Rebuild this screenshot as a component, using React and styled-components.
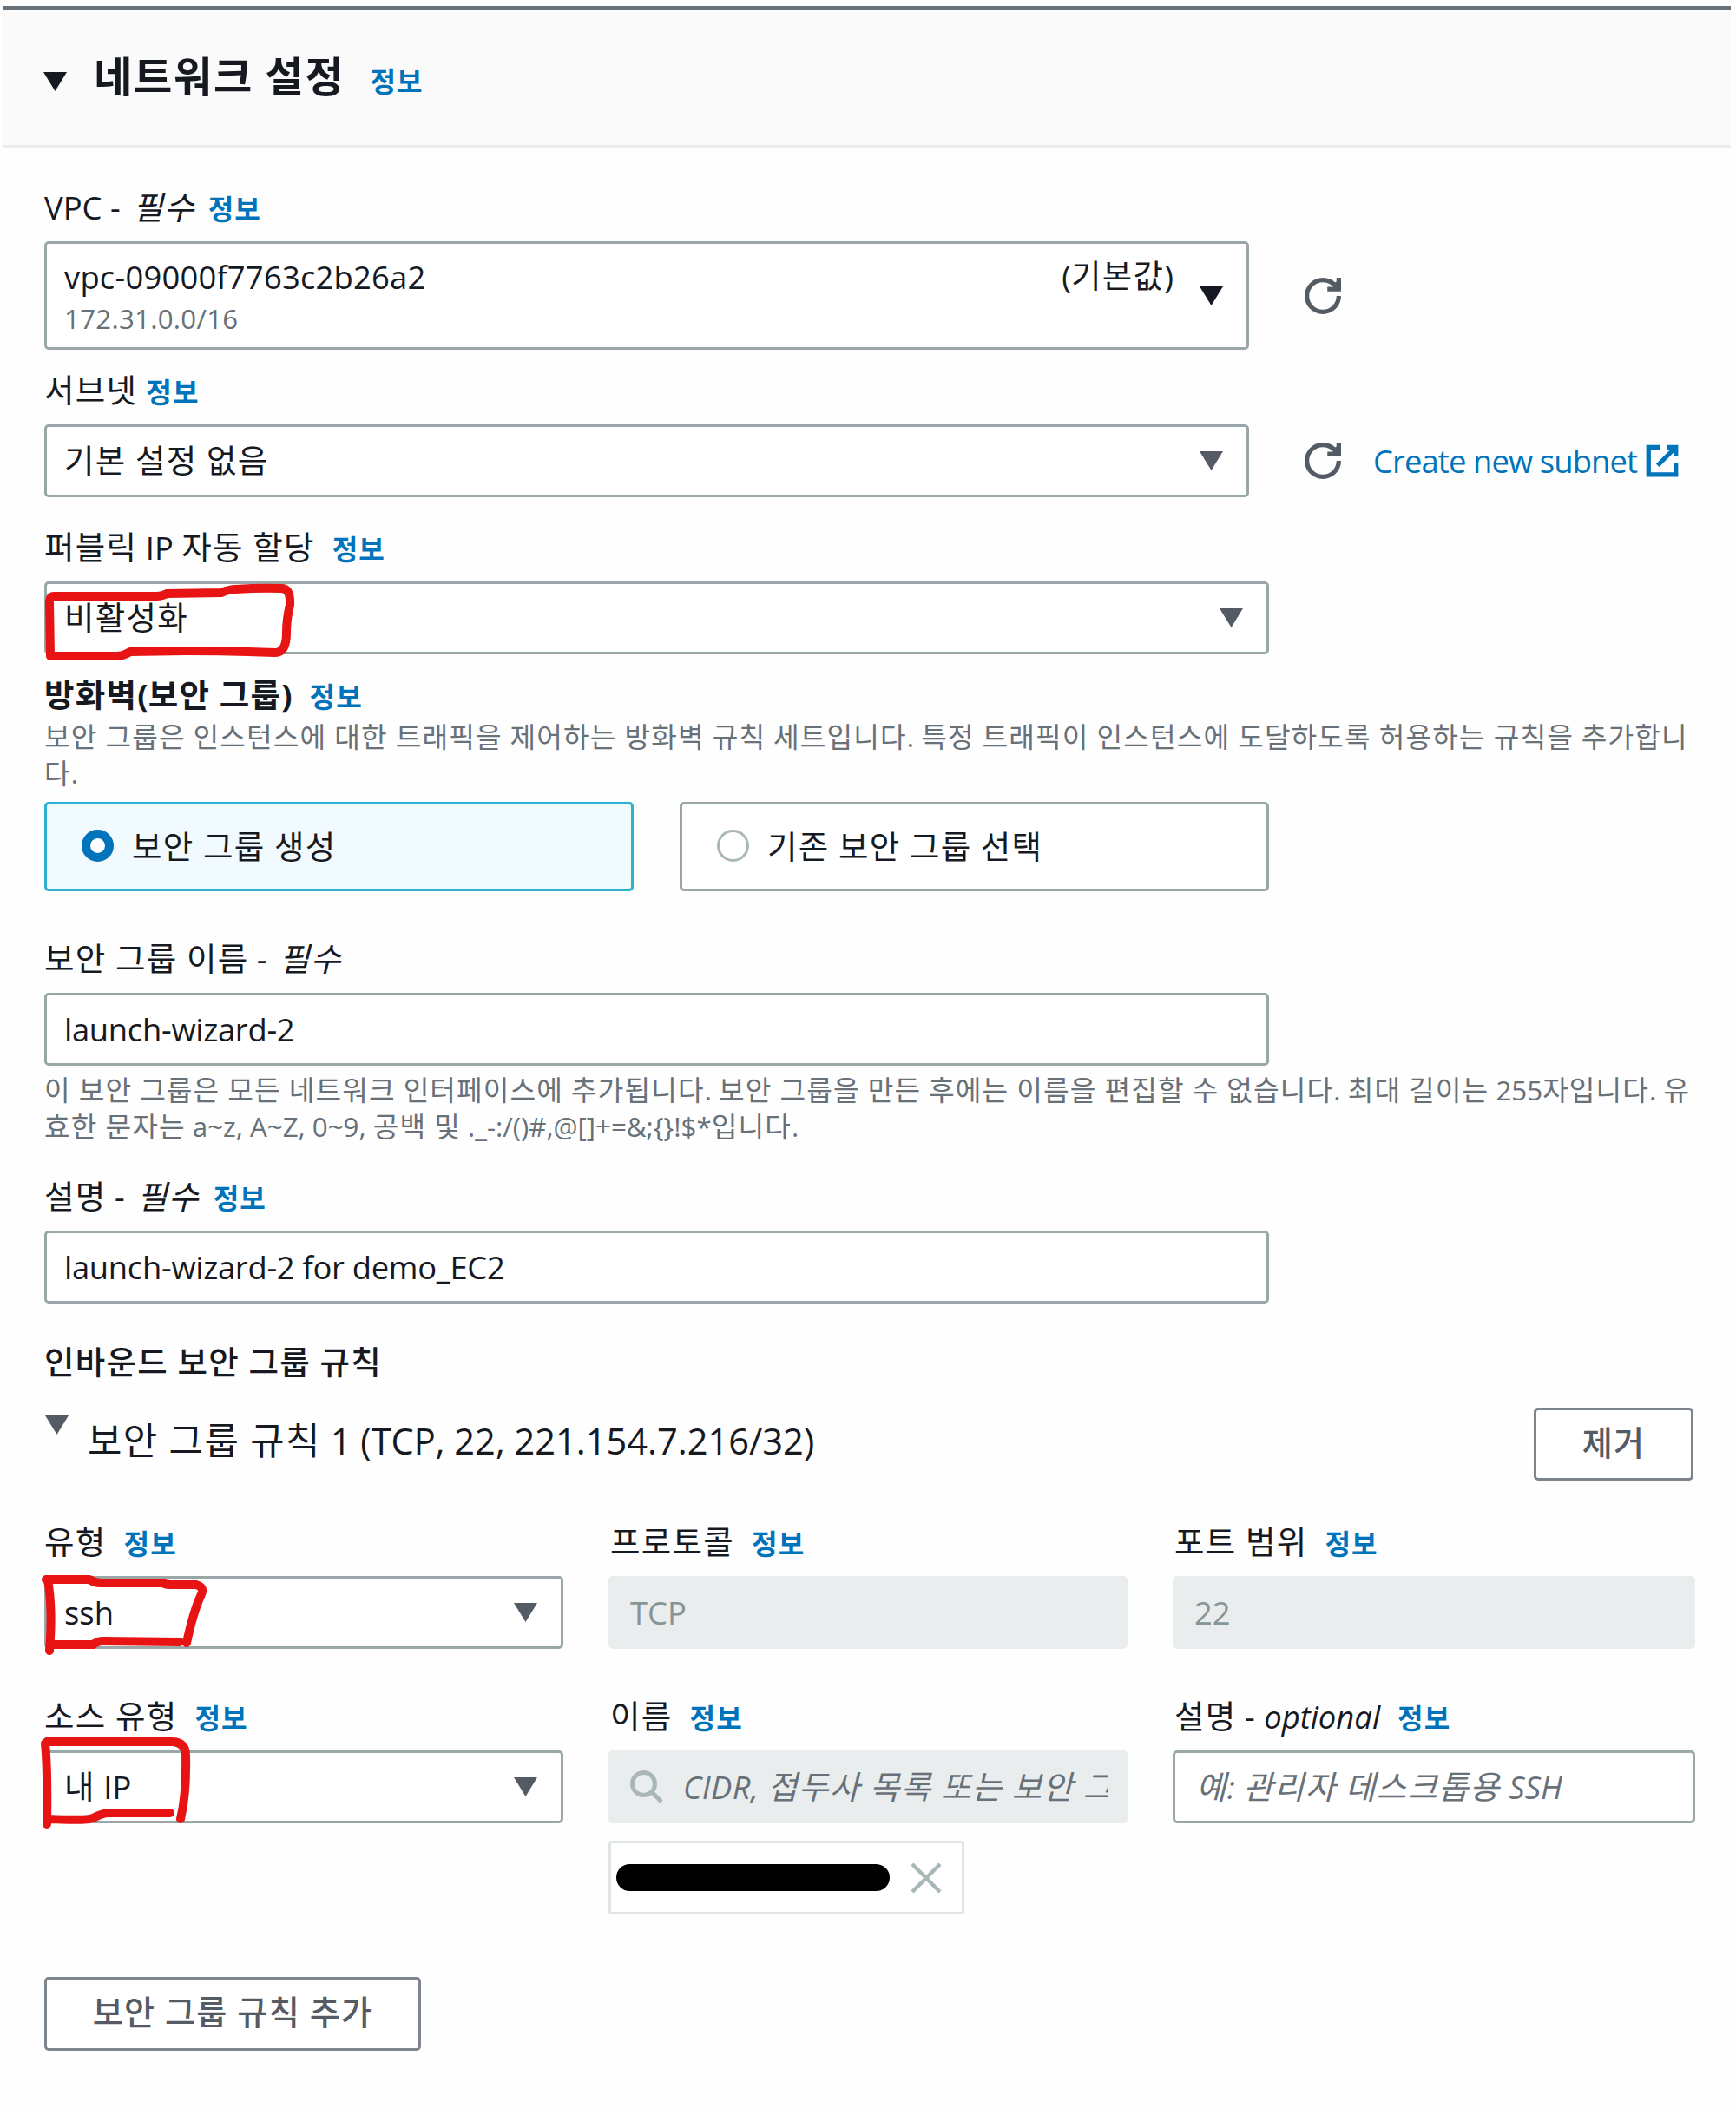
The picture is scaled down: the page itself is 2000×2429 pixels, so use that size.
import React from "react";
import styled, { createGlobalStyle } from "styled-components";

// hangul runs get their own font and spacing, everything else stays latin
function T({ children }) {
  return children
    .split(/([가-힣]+(?: [가-힣]+)*)/)
    .map((part, i) => (i % 2 ? <Ko key={i}>{part}</Ko> : part));
}

function Caret({ dark, className }) {
  return (
    <CaretSvg className={className} viewBox="0 0 27 22">
      <path d="M0 0H27L13.5 22Z" fill={dark ? "#16191f" : "#545b64"} />
    </CaretSvg>
  );
}

function Refresh() {
  return (
    <Icon viewBox="0 0 16 16" stroke="#545b64" strokeWidth="2">
      <path d="M10 5h5V0" />
      <path d="M12 3l3 2V1z" fill="#545b64" stroke="none" />
      <path d="M15 8a7 7 0 0 1-14 0 7 7 0 0 1 7-7 6.9 6.9 0 0 1 6 3.4" />
    </Icon>
  );
}

function External() {
  return (
    <Icon viewBox="0 0 16 16" stroke="#0073bb" strokeWidth="2">
      <path d="M10 2h4v4M6 10l8-8M14 9v5H2V2h5" />
    </Icon>
  );
}

function Field({ label, em, gap = 20, info = true, mt, children }) {
  return (
    <FieldWrap $mt={mt}>
      <Label>
        <T>{label}</T>
        {em && (
          <Em>
            <T>{em}</T>
          </Em>
        )}
        {info && (
          <Info $gap={gap}>
            <T>정보</T>
          </Info>
        )}
      </Label>
      {children}
    </FieldWrap>
  );
}

function Select({ value, mark, width }) {
  return (
    <Box $width={width}>
      <Value>
        <T>{value}</T>
      </Value>
      <Caret />
      {mark && (
        <Scribble>
          <path d={mark} />
        </Scribble>
      )}
    </Box>
  );
}

const marks = {
  publicIp:
    "M11 17L129 17Q136 17 141 14L204 13Q210 10 220 9Q250 7 274 8Q284 9 283 27Q279 44 279 59Q279 82 266 82Q215 80 163 80L99 81Q91 86 83 86L7 86L6 24Q6 17 11 17",
  type: "M2 4L52 4Q58 8 65 8L136 8Q140 10 145 10L175 10Q185 13 181 21Q172 40 164 77M4 4Q10 39 6 86M7 79L56 79Q62 75 67 75L156 76",
  source:
    "M3 -10L148 -10Q163 -9 163 6Q164 50 157 79M1 -8Q4 22 3 85M5 79Q50 81 56 78Q68 72 74 72L145 72",
};

export default function App() {
  return (
    <Panel>
      <GlobalStyle />
      <Header>
        <Caret dark />
        <Title>
          <T>네트워크 설정</T>
        </Title>
        <Info $gap={29}>
          <T>정보</T>
        </Info>
      </Header>
      <Body>
        <Field label="VPC - " em="필수" gap={15} mt={43}>
          <Row>
            <Box $width={1388} $height={125}>
              <Stack>
                <Value $spacing={0.2}>vpc-09000f7763c2b26a2</Value>
                <Small>172.31.0.0/16</Small>
              </Stack>
              <Default>
                <T>(기본값)</T>
              </Default>
              <Caret dark />
            </Box>
            <Refresh />
          </Row>
        </Field>
        <Field label="서브넷" gap={10} mt={21}>
          <Row>
            <Select value="기본 설정 없음" width={1388} />
            <Refresh />
            <Link>
              Create new subnet
              <External />
            </Link>
          </Row>
        </Field>
        <Field label="퍼블릭 IP 자동 할당" mt={32}>
          <Select value="비활성화" width={1411} mark={marks.publicIp} />
        </Field>

        <Heading $mt={21}>
          <T>방화벽(보안 그룹)</T>
          <Info $gap={20}>
            <T>정보</T>
          </Info>
        </Heading>
        <Hint $mt={2}>
          <T>보안 그룹은 인스턴스에 대한 트래픽을 제어하는 방화벽 규칙 세트입니다. 특정 트래픽이 인스턴스에 도달하도록 허용하는 규칙을 추가합니</T>
          <br />
          <T>다.</T>
        </Hint>
        <Cards>
          <Card $selected>
            <Radio $selected />
            <T>보안 그룹 생성</T>
          </Card>
          <Card>
            <Radio />
            <T>기존 보안 그룹 선택</T>
          </Card>
        </Cards>

        <Field label="보안 그룹 이름 - " em="필수" info={false} mt={52}>
          <Box $width={1411}>
            <Value $spacing={-0.3}>launch-wizard-2</Value>
          </Box>
        </Field>
        <Hint $mt={8}>
          <T>이 보안 그룹은 모든 네트워크 인터페이스에 추가됩니다. 보안 그룹을 만든 후에는 이름을 편집할 수 없습니다. 최대 길이는 255자입니다. 유</T>
          <br />
          <T>{"효한 문자는 a~z, A~Z, 0~9, 공백 및 ._-:/()#,@[]+=&;{}!$*입니다."}</T>
        </Hint>
        <Field label="설명 - " em="필수" gap={16} mt={34}>
          <Box $width={1411}>
            <Value $spacing={-0.3}>launch-wizard-2 for demo_EC2</Value>
          </Box>
        </Field>

        <Heading $mt={42} $weight={500}>
          <T>인바운드 보안 그룹 규칙</T>
        </Heading>
        <Rule>
          <RuleCaret />
          <RuleName>
            <T>보안 그룹 규칙 1 (TCP, 22, 221.154.7.216/32)</T>
          </RuleName>
          <Button $width={184}>
            <T>제거</T>
          </Button>
        </Rule>

        <Grid $mt={45}>
          <Field label="유형">
            <Select value="ssh" mark={marks.type} />
          </Field>
          <Field label="프로토콜">
            <Box $disabled>
              <Value>TCP</Value>
            </Box>
          </Field>
          <Field label="포트 범위">
            <Box $disabled>
              <Value>22</Value>
            </Box>
          </Field>
        </Grid>
        <Grid $mt={52}>
          <Field label="소스 유형">
            <Select value="내 IP" mark={marks.source} />
          </Field>
          <Field label="이름">
            <Box $disabled>
              <SearchIcon viewBox="0 0 38 38">
                <circle cx="15.5" cy="15.5" r="13" />
                <path d="M25 25L36 36" />
              </SearchIcon>
              <SearchPlaceholder>
                <T>CIDR, 접두사 목록 또는 보안 그</T>
              </SearchPlaceholder>
            </Box>
            <Token>
              <Redacted />
              <CloseIcon viewBox="0 0 36 36">
                <path d="M2 2L34 34M34 2L2 34" />
              </CloseIcon>
            </Token>
          </Field>
          <Field label="설명 - " em="optional">
            <Box>
              <Placeholder $indent={4}>
                <T>예: 관리자 데스크톱용 SSH</T>
              </Placeholder>
            </Box>
          </Field>
        </Grid>
        <AddButton $width={434}>
          <T>보안 그룹 규칙 추가</T>
        </AddButton>
      </Body>
    </Panel>
  );
}

const GlobalStyle = createGlobalStyle`
  body {
    margin: 0;
    background: #fefefe;
    font-family: "Open Sans", "Noto Sans CJK KR", sans-serif;
    font-size: 36.4px;
    line-height: 52px;
    color: #16191f;
  }

  * {
    box-sizing: border-box;
  }
`;

const Ko = styled.span`
  font-family: "Noto Sans CJK KR", sans-serif;
  font-size: 1.03em;
  line-height: 0;
  letter-spacing: 0.034em;
  word-spacing: 0.02em;
`;

const CaretSvg = styled.svg`
  width: 27px;
  height: 22px;
  flex: none;
`;

const Icon = styled.svg`
  width: 42px;
  height: 42px;
  flex: none;
  fill: none;
`;

const Panel = styled.main`
  display: flow-root;
  padding: 7px 6px 0 4px;
`;

const Header = styled.header`
  display: flex;
  align-items: center;
  height: 163px;
  padding: 0 0 0 46px;
  border-top: 4px solid #687078;
  border-bottom: 3px solid #eaeded;
  background: #fafafa;

  ${CaretSvg} {
    margin-top: 9px;
  }
`;

const Title = styled.h2`
  margin: -2px 0 0 31px;
  font-size: 46.8px;
  font-weight: 700;
`;

const Info = styled.a`
  margin-left: ${(p) => p.$gap}px;
  font-size: 31.2px;
  font-weight: 700;
  color: #0073bb;

  ${Header} & {
    padding-top: 9px;
  }
`;

const Body = styled.section`
  padding-left: 47px;
`;

const FieldWrap = styled.div`
  margin-top: ${(p) => p.$mt || 0}px;
  min-width: 0;
`;

const Label = styled.div`
  height: 52px;
  margin-bottom: 13px;
  white-space: pre;
`;

const Em = styled.i`
  margin-left: 5px;
`;

const Row = styled.div`
  display: flex;
  align-items: center;

  ${Icon} {
    margin-left: 64px;
  }
`;

const Box = styled.div`
  position: relative;
  display: flex;
  align-items: center;
  width: ${(p) => (p.$width ? p.$width + "px" : "100%")};
  height: ${(p) => p.$height || 84}px;
  padding: 0 27px 0 ${(p) => (p.$disabled ? 22 : 20)}px;
  border: 3px solid ${(p) => (p.$disabled ? "#eaeded" : "#9aa7a8")};
  border-radius: 5px;
  background: ${(p) => (p.$disabled ? "#eaeded" : "#fff")};
  color: ${(p) => (p.$disabled ? "#879596" : "inherit")};
`;

const Value = styled.div`
  flex: 1;
  white-space: pre;
  letter-spacing: ${(p) => p.$spacing || 0}px;
`;

const Stack = styled.div`
  flex: 1;
`;

const Small = styled.div`
  margin-top: 2px;
  font-size: 31.2px;
  line-height: 41.6px;
  letter-spacing: 0.3px;
  color: #687078;
`;

const Default = styled.div`
  align-self: flex-start;
  margin: 11px 30px 0 0;
`;

const Scribble = styled.svg`
  position: absolute;
  top: -3px;
  left: -3px;
  width: 300px;
  height: 84px;
  overflow: visible;
  fill: none;
  stroke: #e81313;
  stroke-width: 10;
  stroke-linecap: round;
  stroke-linejoin: round;
`;

const Link = styled.a`
  display: flex;
  align-items: center;
  margin-left: 37px;
  color: #0073bb;
  letter-spacing: -0.9px;

  ${Row} & ${Icon} {
    margin-left: 8px;
  }
`;

const Heading = styled.div`
  height: 52px;
  margin-top: ${(p) => p.$mt}px;
  font-weight: ${(p) => p.$weight || 700};
`;

const Hint = styled.div`
  margin-top: ${(p) => p.$mt}px;
  font-size: 31.3px;
  line-height: 41.6px;
  color: #687078;
  white-space: nowrap;
`;

const Cards = styled.div`
  display: flex;
  gap: 53px;
  margin-top: 12px;
`;

const Card = styled.div`
  display: flex;
  align-items: center;
  width: 679px;
  height: 103px;
  padding: 0 0 3px 40px;
  border: 3px solid ${(p) => (p.$selected ? "#2eb0d3" : "#9aa7a8")};
  border-radius: 5px;
  background: ${(p) => (p.$selected ? "#f1faff" : "#fff")};
`;

const Radio = styled.span`
  width: 37px;
  height: 37px;
  margin-right: 21px;
  border: ${(p) => (p.$selected ? "10px solid #0073bb" : "3px solid #aab7b8")};
  border-radius: 50%;
  background: #fff;
`;

const Rule = styled.div`
  display: flex;
  align-items: center;
  width: 1900px;
  height: 84px;
  margin-top: 26px;
`;

const RuleCaret = styled(Caret)`
  align-self: flex-start;
  margin: 9px 0 0 1px;
`;

const RuleName = styled.div`
  flex: 1;
  margin: 0 0 9px 22px;
  font-size: 41.6px;
`;

const Button = styled.button`
  width: ${(p) => p.$width}px;
  height: 84px;
  padding: 0 0 3px;
  border: 3px solid #7d848b;
  border-radius: 5px;
  background: #fff;
  font: inherit;
  font-size: 37px;
  font-weight: 500;
  color: #545b64;
`;

const AddButton = styled(Button)`
  display: block;
  height: 85px;
  margin-top: 72px;
`;

const Grid = styled.div`
  display: grid;
  grid-template-columns: 598px 598px 602px;
  column-gap: 52px;
  margin-top: ${(p) => p.$mt}px;

  ${FieldWrap} + ${FieldWrap} ${Label} {
    padding-left: 2px;
  }

  ${Em} {
    margin-left: 1px;
  }
`;

const Placeholder = styled.div`
  flex: 1;
  margin-left: ${(p) => p.$indent || 0}px;
  overflow: hidden;
  white-space: nowrap;
  font-style: italic;
  color: #687078;
`;

const SearchPlaceholder = styled(Placeholder)`
  margin-right: -7px;
  letter-spacing: 0.4px;
`;

const SearchIcon = styled.svg`
  flex: none;
  width: 38px;
  height: 38px;
  margin-right: 23px;
  fill: none;
  stroke: #aab7b8;
  stroke-width: 5;
`;

const Token = styled.div`
  display: flex;
  align-items: center;
  justify-content: space-between;
  width: 410px;
  height: 85px;
  margin-top: 20px;
  padding: 0 23px 0 6px;
  border: 3px solid #dfe5e5;
  border-radius: 4px;
  background: #fff;
`;

const Redacted = styled.span`
  width: 315px;
  height: 31px;
  border-radius: 16px;
  background: #000;
`;

const CloseIcon = styled.svg`
  width: 36px;
  height: 36px;
  fill: none;
  stroke: #aab7b8;
  stroke-width: 4.5;
`;
